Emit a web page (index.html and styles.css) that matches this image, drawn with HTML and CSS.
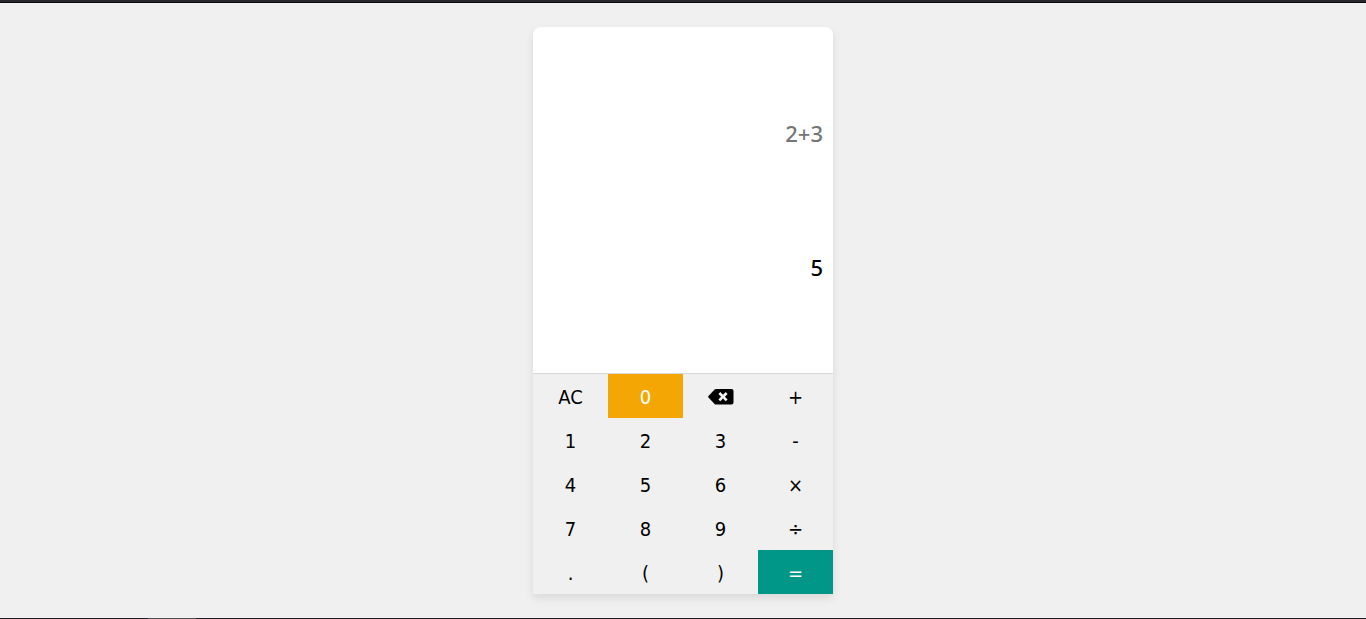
FILE: index.html
```html
<!DOCTYPE html>
<html lang="en">
<head>
<meta charset="utf-8">
<meta name="viewport" content="width=device-width, initial-scale=1">
<title>Calculator</title>
<link rel="stylesheet" href="styles.css">
</head>
<body>
<div class="top-edge"></div>
<main class="stage">
  <section class="calculator" aria-label="Calculator">
    <div class="display">
      <input class="expression" type="text" value="2+3" aria-label="Expression" readonly>
      <output class="result" aria-label="Result">5</output>
    </div>
    <div class="keys">
      <button class="key" type="button">AC</button>
      <button class="key key-active" type="button">0</button>
      <button class="key" type="button" aria-label="Backspace">
        <svg class="backspace" viewBox="0 0 26 16" aria-hidden="true">
          <path fill="currentColor" fill-rule="evenodd" d="M8 0h15.500A2 2 0 0 1 25.500 2v11.500a2 2 0 0 1-2 2H8a2 2 0 0 1-1.400-.6L.5 8.600a1.200 1.200 0 0 1 0-1.700L6.600.6A2 2 0 0 1 8 0zM12.300 3.100l-1.900 1.900 2.700 2.700-2.700 2.700 1.900 1.900 2.700-2.700 2.700 2.700 1.900-1.900-2.700-2.700 2.700-2.700-1.900-1.900-2.700 2.700z"/>
        </svg>
      </button>
      <button class="key" type="button">+</button>
      <button class="key" type="button">1</button>
      <button class="key" type="button">2</button>
      <button class="key" type="button">3</button>
      <button class="key" type="button">-</button>
      <button class="key" type="button">4</button>
      <button class="key" type="button">5</button>
      <button class="key" type="button">6</button>
      <button class="key" type="button">×</button>
      <button class="key" type="button">7</button>
      <button class="key" type="button">8</button>
      <button class="key" type="button">9</button>
      <button class="key" type="button">÷</button>
      <button class="key" type="button">.</button>
      <button class="key" type="button">(</button>
      <button class="key" type="button">)</button>
      <button class="key key-equals" type="button">=</button>
    </div>
  </section>
</main>
<div class="bottom-edge"><div class="bottom-mark"></div></div>
</body>
</html>
```
FILE: styles.css
```css
* {
  box-sizing: border-box;
}

body {
  display: flex;
  flex-direction: column;
  min-height: 100vh;
  margin: 0;
  background: #f0f0f0;
  color: #000;
  font-family: Tahoma, "DejaVu Sans Condensed", "DejaVu Sans", sans-serif;
  font-size: 20px;
}

.top-edge {
  height: 3px;
  background: #29262c;
  border-bottom: 1px solid #0c0c0e;
}

.bottom-edge {
  height: 1px;
  padding-left: 148px;
  background: #201c24;
}

.bottom-mark {
  width: 48px;
  height: 1px;
  background: #505050;
}

.stage {
  display: flex;
  flex: 1;
  justify-content: center;
  padding: 24px;
}

.calculator {
  display: flex;
  flex-direction: column;
  width: 300px;
  border-radius: 8px 8px 0 0;
  box-shadow: 0 4px 8px rgba(0, 0, 0, 0.1);
}

.display {
  display: flex;
  flex: 1;
  flex-direction: column;
  justify-content: space-evenly;
  padding: 0 10px;
  background: #fff;
  border-radius: 8px 8px 0 0;
  font-family: "Noto Sans", sans-serif;
  font-size: 22px;
  font-weight: 500;
}

.expression,
.result {
  display: block;
  width: 100%;
  height: 56px;
  padding: 0;
  border: 0;
  background: transparent;
  font: inherit;
  line-height: 56px;
  text-align: right;
}

.expression {
  color: #757575;
  outline: 0;
}

.keys {
  display: grid;
  grid-template-columns: repeat(4, 1fr);
  grid-auto-rows: 44px;
  border-top: 1px solid #d9d9d9;
}

.key {
  display: flex;
  align-items: center;
  justify-content: center;
  padding: 1px 0 0;
  border: 0;
  background: #f0f0f0;
  color: #000;
  font: inherit;
  cursor: pointer;
}

.key-active {
  background: #f4a704;
  color: #fff;
}

.key-equals {
  background: #009688;
  color: #fff;
}

.backspace {
  width: 26px;
  height: 16px;
}
```
